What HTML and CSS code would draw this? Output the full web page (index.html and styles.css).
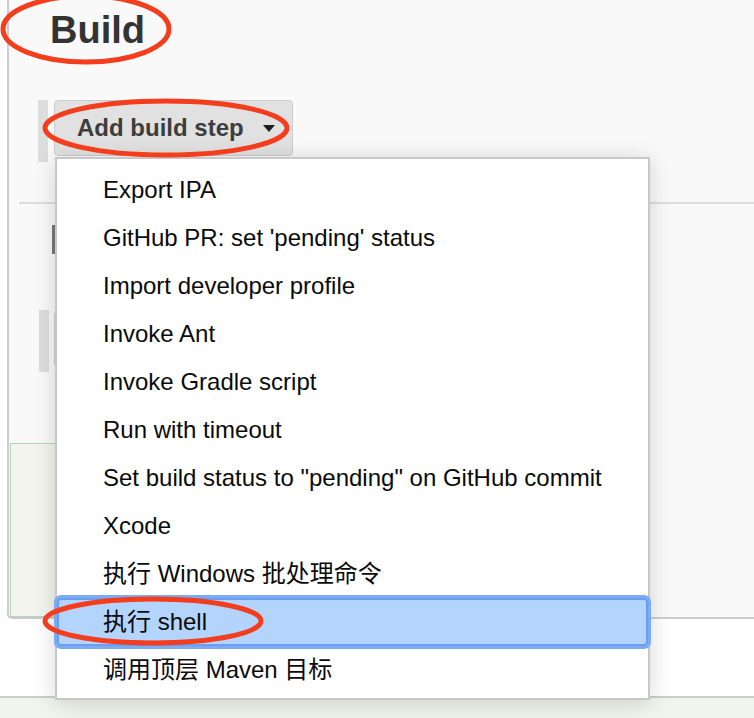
FILE: index.html
```html
<!DOCTYPE html>
<html>
<head>
<meta charset="utf-8">
<link rel="stylesheet" href="styles.css">
</head>
<body>
<div class="page">
  <div class="panel">
    <h1 class="title">Build</h1>
    <div class="step-row">
      <div class="handle"></div>
      <div class="add-btn"><span class="add-label">Add build step</span><span class="caret"></span></div>
    </div>
    <div class="divider"></div>
    <div class="dark-bar"></div>
    <div class="block-row">
      <div class="light-block"></div>
      <div class="thin-line"></div>
    </div>
    <div class="green-box"></div>
  </div>
  <div class="strip"></div>
</div>

<ul class="menu">
  <li class="item">Export IPA</li>
  <li class="item">GitHub PR: set 'pending' status</li>
  <li class="item">Import developer profile</li>
  <li class="item">Invoke Ant</li>
  <li class="item">Invoke Gradle script</li>
  <li class="item">Run with timeout</li>
  <li class="item">Set build status to "pending" on GitHub commit</li>
  <li class="item">Xcode</li>
  <li class="item">执行 Windows 批处理命令</li>
  <li class="item active">执行 shell</li>
  <li class="item">调用顶层 Maven 目标</li>
</ul>

<svg class="marks" width="754" height="718" viewBox="0 0 754 718">
  <ellipse cx="86" cy="29" rx="83" ry="33" />
  <ellipse cx="166" cy="128" rx="121" ry="27" />
  <ellipse cx="153" cy="621" rx="108" ry="22" />
</svg>
</body>
</html>
```

FILE: styles.css
```css
html, body {
  margin: 0;
  padding: 0;
}
body {
  background: #f2f4ee;
  font-family: "Liberation Sans", "Noto Sans CJK SC", Arial, sans-serif;
  width: 754px;
  height: 718px;
  overflow: hidden;
  position: relative;
}
.page {
  background: #ffffff;
  border-bottom: 2px solid #cccccc;
}
.panel {
  margin-left: 7px;
  background: #f9f9f9;
  border-left: 2px solid #cccccc;
  border-bottom: 2px solid #cccccc;
  border-bottom-left-radius: 5px;
  height: 617px;
  box-sizing: content-box;
  display: flex;
  flex-direction: column;
}
.title {
  margin: 0;
  padding-left: 41px;
  font-size: 38px;
  line-height: 60px;
  height: 60px;
  font-weight: bold;
  color: #333333;
}
.step-row {
  margin-top: 40px;
  display: flex;
  align-items: flex-start;
}
.handle {
  margin-left: 29px;
  width: 10px;
  height: 62px;
  background: #dddddd;
}
.add-btn {
  margin-left: 6px;
  width: 239px;
  height: 56px;
  box-sizing: border-box;
  border: 1px solid #cccccc;
  border-radius: 4px;
  background: #e1e1e1;
  display: flex;
  align-items: center;
  padding-left: 22px;
}
.add-label {
  font-size: 24px;
  font-weight: bold;
  color: #3d3d3d;
}
.caret {
  margin-left: 19px;
  width: 0;
  height: 0;
  border-left: 6.5px solid transparent;
  border-right: 6.5px solid transparent;
  border-top: 7px solid #1e1e1e;
  margin-top: 1px;
}
.divider {
  margin-top: 40px;
  margin-left: 10px;
  height: 2px;
  background: #dddddd;
}
.dark-bar {
  margin-top: 21px;
  margin-left: 43px;
  width: 3px;
  height: 29px;
  background: #777777;
}
.block-row {
  margin-top: 56px;
  display: flex;
  align-items: flex-start;
}
.light-block {
  margin-left: 30px;
  width: 10px;
  height: 62px;
  background: #dddddd;
}
.thin-line {
  margin-left: 5px;
  margin-top: 3px;
  width: 2px;
  height: 52px;
  background: #cfcfcf;
}
.green-box {
  margin-top: 71px;
  margin-left: 1px;
  width: 600px;
  height: 174px;
  box-sizing: border-box;
  border: 1px solid #b6d3c1;
  border-right: none;
  background: #f4f4ee;
}
.strip {
  height: 77px;
}
.menu {
  position: absolute;
  left: 55px;
  top: 157px;
  width: 595px;
  height: 543px;
  box-sizing: border-box;
  margin: 0;
  padding: 7px 0 4px 0;
  list-style: none;
  background: #ffffff;
  border: 2px solid #c8c8c8;
  box-shadow: 0 3px 22px rgba(0, 0, 0, 0.16);
}
.item {
  height: 48px;
  line-height: 48px;
  padding-left: 46px;
  font-size: 24px;
  color: #0a0a0a;
  white-space: nowrap;
}
.item.active {
  background: #b3d4fd;
  border-radius: 4px;
  box-shadow: 0 0 0 3px #7aabf4, inset 0 0 0 2px #6a9ff0;
  position: relative;
}
.marks {
  position: absolute;
  left: 0;
  top: 0;
  pointer-events: none;
}
.marks ellipse {
  fill: none;
  stroke: #f33d1c;
  stroke-width: 5;
}
```
